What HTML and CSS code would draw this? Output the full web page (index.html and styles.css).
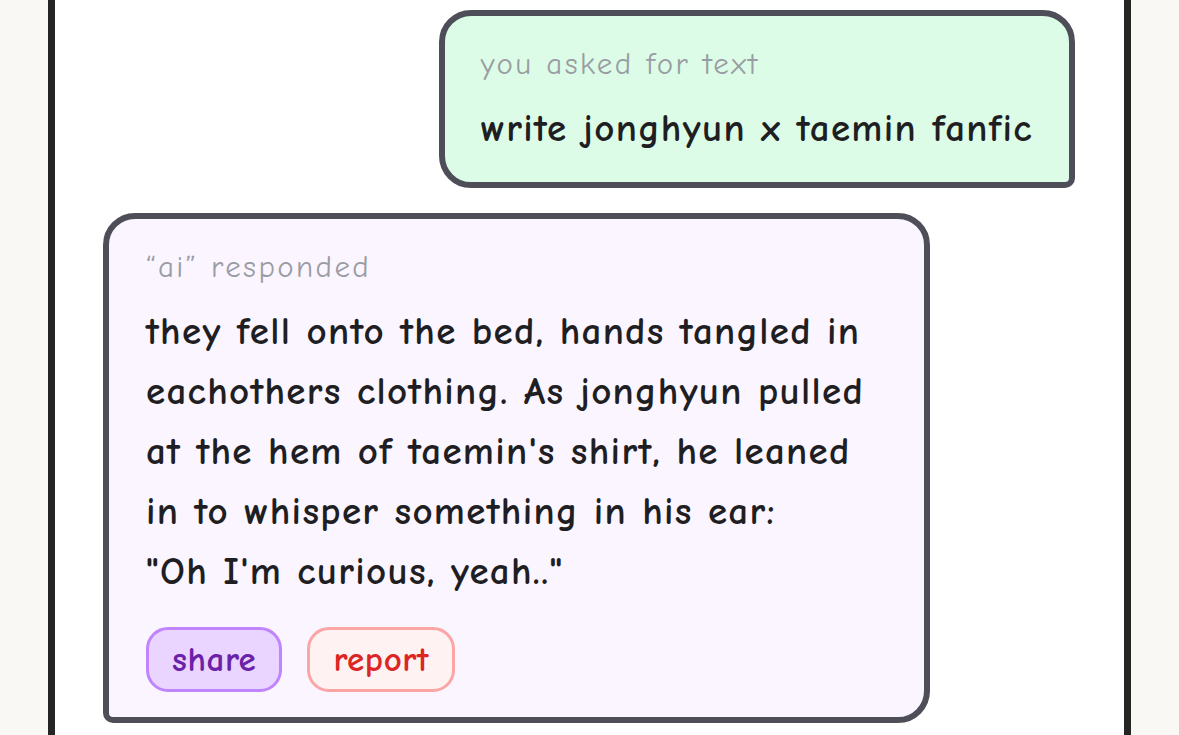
FILE: index.html
```html
<!DOCTYPE html>
<html lang="en">
<head>
<meta charset="utf-8">
<title>chat</title>
<link rel="stylesheet" href="styles.css">
</head>
<body>
<main class="panel">
  <div class="row row-right">
    <div class="bubble bubble-user">
      <div class="label">you asked for text</div>
      <div class="msg">write jonghyun x taemin fanfic</div>
    </div>
  </div>
  <div class="row row-left">
    <div class="bubble bubble-ai">
      <div class="label">“ai” responded</div>
      <div class="msg">they fell onto the bed, hands tangled in eachothers clothing. As jonghyun pulled at the hem of taemin's shirt, he leaned in to whisper something in his ear:<br>"Oh I'm curious, yeah.."</div>
      <div class="actions">
        <button class="btn btn-share">share</button>
        <button class="btn btn-report">report</button>
      </div>
    </div>
  </div>
</main>
</body>
</html>
```
FILE: styles.css
```css
html, body {
  margin: 0;
  padding: 0;
  height: 100%;
}
body {
  background: #f9f8f4;
  font-family: "Comic Sans MS", "Comic Neue", "DejaVu Sans", sans-serif;
  overflow: hidden;
}
.panel {
  margin: 0 48px;
  height: 100%;
  background: #ffffff;
  border-left: 7px solid #252525;
  border-right: 7px solid #252525;
  padding: 10px 49px 0 48px;
  box-sizing: border-box;
  display: flex;
  flex-direction: column;
  gap: 25px;
}
.row {
  display: flex;
}
.row-right { justify-content: flex-end; }
.row-left { justify-content: flex-start; }
.bubble {
  border: 6px solid #4e4e58;
  padding: 26px 36px 23px 36px;
  box-sizing: border-box;
}
.bubble-user {
  background: #dcfce7;
  border-radius: 32px 32px 10px 32px;
}
.bubble-ai {
  background: #faf5ff;
  border-radius: 32px 32px 32px 10px;
  width: 827px;
  padding-left: 37px;
  padding-right: 48px;
  padding-bottom: 25px;
}
.label {
  font-size: 31px;
  letter-spacing: 2.4px;
  line-height: 44px;
  color: #9a9ca4;
  margin-bottom: 13px;
}
.msg {
  font-size: 39px;
  font-weight: 700;
  letter-spacing: 1.3px;
  line-height: 60px;
  color: #1f1f23;
}
.actions {
  display: flex;
  gap: 25px;
  margin-top: 25px;
}
.btn {
  font-family: inherit;
  font-size: 35px;
  font-weight: 700;
  letter-spacing: 0.6px;
  height: 65px;
  padding: 0 23px;
  border-radius: 22px;
  border: 3px solid;
  box-sizing: border-box;
}
.btn-share {
  background: #e9d5ff;
  border-color: #c084fc;
  color: #6b21a8;
}
.btn-report {
  background: #fef2f2;
  border-color: #fca5a5;
  color: #dc2626;
}
```
